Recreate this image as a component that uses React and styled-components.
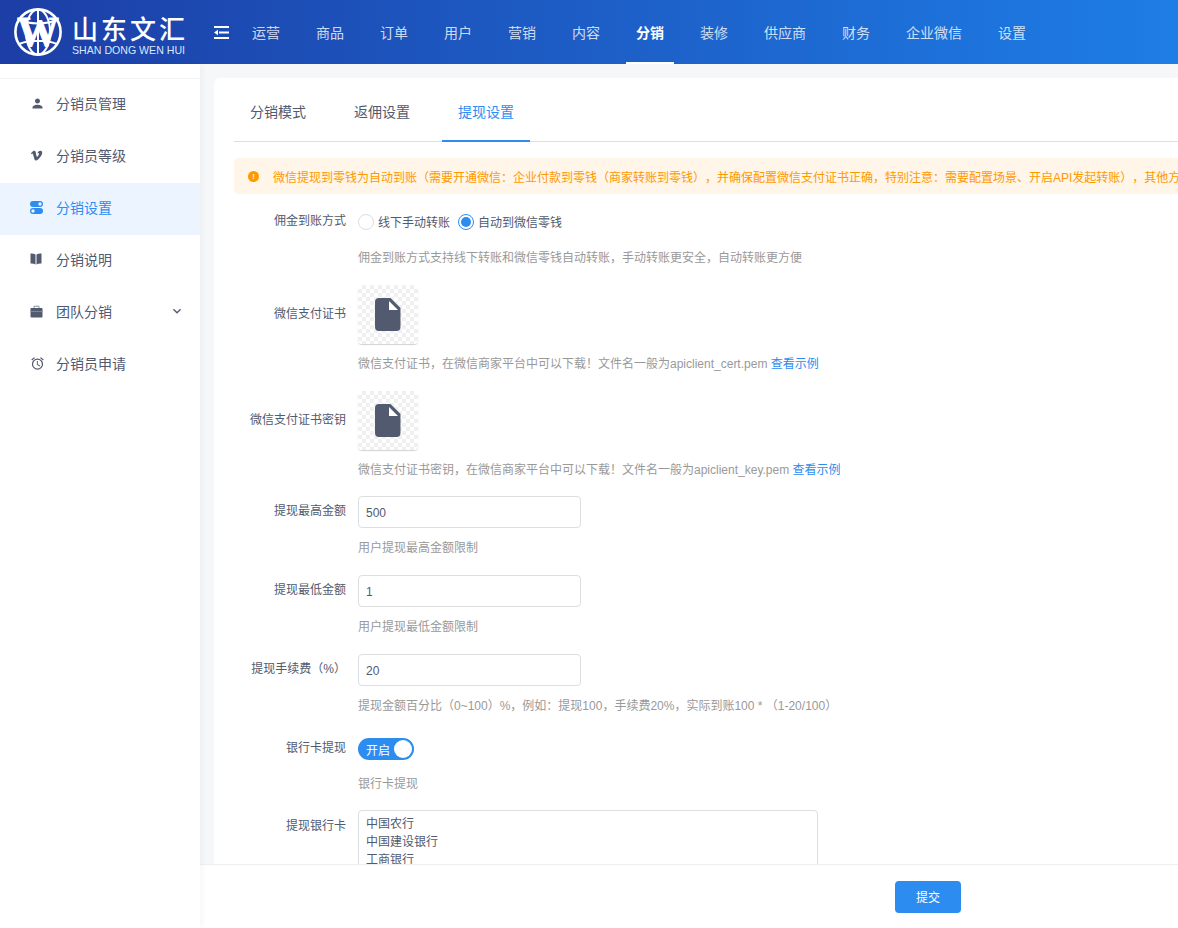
import React from 'react';
import styled, { createGlobalStyle } from 'styled-components';
import { FaVimeoV } from 'react-icons/fa';
import { MdPerson, MdOutlineAlarm, MdKeyboardArrowDown } from 'react-icons/md';

const GlobalStyle = createGlobalStyle`
    html, body {
        margin: 0;
        padding: 0;
        height: 100%;
        overflow: hidden;
    }
    body {
        font-family: "Liberation Sans", "Noto Sans CJK SC", sans-serif;
        font-size: 12px;
        color: #515a6e;
        text-spacing-trim: space-all;
    }
    * {
        box-sizing: border-box;
    }
`;

const Page = styled.div`
    width: 100%;
    height: 100vh;
    display: flex;
    flex-direction: column;
    overflow: hidden;
`;

const Header = styled.header`
    height: 64px;
    flex-shrink: 0;
    display: flex;
    align-items: center;
    background: linear-gradient(90deg, #1c3ea6 0%, #1e7de6 100%);
    color: #fff;
`;

const Logo = styled.div`
    width: 200px;
    height: 64px;
    padding-left: 14px;
    display: flex;
    align-items: center;
    gap: 10px;
    flex-shrink: 0;
`;

const LogoWords = styled.div`
    display: flex;
    flex-direction: column;
    gap: 2px;
    margin-top: 5px;
`;

const LogoTitle = styled.div`
    font-family: "Noto Sans CJK SC", sans-serif;
    font-size: 26px;
    font-weight: 500;
    line-height: 28px;
    letter-spacing: 3px;
    white-space: nowrap;
`;

const LogoSub = styled.div`
    font-size: 10.6px;
    line-height: 12px;
    white-space: nowrap;
    color: #dbe6fa;
`;

const MenuToggle = styled.div`
    width: 34px;
    padding-left: 14px;
    display: flex;
    flex-shrink: 0;
`;

const Nav = styled.nav`
    display: flex;
    height: 64px;
`;

const NavItem = styled.div`
    position: relative;
    padding: 0 18px;
    line-height: 66px;
    font-size: 14px;
    white-space: nowrap;
    color: ${(p) => (p.$active ? '#fff' : 'rgba(255, 255, 255, 0.8)')};
    font-weight: ${(p) => (p.$active ? 700 : 400)};

    &::after {
        content: '';
        display: ${(p) => (p.$active ? 'block' : 'none')};
        position: absolute;
        left: 8px;
        right: 8px;
        bottom: 0;
        height: 2px;
        background: #fff;
    }
`;

const Body = styled.div`
    flex: 1;
    min-height: 0;
    display: flex;
`;

const Sidebar = styled.aside`
    width: 200px;
    flex-shrink: 0;
    background: #fff;
    padding-top: 14px;
    box-shadow: 2px 0 6px rgba(0, 0, 0, 0.04);
    position: relative;
    z-index: 2;
`;

const SideList = styled.div`
    border-top: 1px solid #f3f4f6;
`;

const SideItem = styled.div`
    height: 52px;
    padding: 0 15px 4px 30px;
    display: flex;
    align-items: center;
    font-size: 14px;
    color: ${(p) => (p.$active ? '#2d8cf0' : '#515a6e')};
    background: ${(p) => (p.$active ? '#ecf5ff' : 'transparent')};
`;

const SideIcon = styled.span`
    width: 26px;
    display: flex;
    align-items: center;
    flex-shrink: 0;
`;

const SideLabel = styled.span`
    flex: 1;
`;

const Main = styled.main`
    flex: 1;
    min-width: 0;
    display: flex;
    flex-direction: column;
    background: #f5f7f9;
`;

const Scroll = styled.div`
    flex: 1;
    min-height: 0;
    overflow: hidden;
    padding: 14px 0 0 14px;
`;

const Card = styled.div`
    width: 1300px;
    height: 900px;
    background: #fff;
    border-radius: 6px 0 0 0;
    padding: 4px 20px 0;
`;

const Tabs = styled.div`
    display: flex;
    gap: 16px;
    height: 60px;
    border-bottom: 1px solid #dcdee2;
`;

const Tab = styled.div`
    padding: 0 16px;
    line-height: 60px;
    font-size: 14px;
    color: ${(p) => (p.$active ? '#2d8cf0' : '#515a6e')};
    border-bottom: 2px solid ${(p) => (p.$active ? '#2d8cf0' : 'transparent')};
    height: 60px;
`;

const Alert = styled.div`
    margin-top: 16px;
    height: 36px;
    padding-left: 14px;
    display: flex;
    align-items: center;
    gap: 14px;
    border-radius: 4px;
    background: #fff5e9;
    color: #ff9900;
    white-space: nowrap;
    overflow: hidden;
`;

const AlertDot = styled.span`
    width: 11px;
    height: 11px;
    border-radius: 50%;
    background: #ff9900;
    color: #fff5e9;
    font-size: 8px;
    line-height: 11px;
    font-weight: 700;
    text-align: center;
    flex-shrink: 0;
`;

const Form = styled.div`
    margin-top: 11px;
`;

const Row = styled.div`
    display: flex;
    margin-bottom: ${(p) => p.$gap ?? 18}px;
`;

const Label = styled.div`
    width: 112px;
    flex-shrink: 0;
    text-align: right;
    line-height: ${(p) => p.$line ?? 30}px;
    color: #515a6e;
    white-space: nowrap;
`;

const Control = styled.div`
    margin-left: 12px;
    flex: 1;
    min-width: 0;
`;

const Tip = styled.div`
    margin-top: ${(p) => p.$top ?? 11}px;
    line-height: 18px;
    color: #999;
    white-space: nowrap;
`;

const TipLink = styled.span`
    color: #2d8cf0;
`;

const RadioGroup = styled.div`
    height: 33px;
    display: flex;
    align-items: center;
    gap: 8px;
`;

const Radio = styled.label`
    display: flex;
    align-items: center;
    gap: 4px;
`;

const RadioMark = styled.span`
    width: 16px;
    height: 16px;
    border-radius: 50%;
    border: 1px solid ${(p) => (p.$checked ? '#2d8cf0' : '#dcdee2')};
    display: flex;
    align-items: center;
    justify-content: center;

    &::after {
        content: '';
        display: ${(p) => (p.$checked ? 'block' : 'none')};
        width: 10px;
        height: 10px;
        border-radius: 50%;
        background: #2d8cf0;
    }
`;

const FileBox = styled.div`
    width: 60px;
    height: 59px;
    border-radius: 4px;
    display: flex;
    align-items: center;
    justify-content: center;
    background: repeating-conic-gradient(#f0f0f0 0 25%, #fff 0 50%) 0 0 / 8px 8px;
    box-shadow: 0 1px 1px rgba(0, 0, 0, 0.18);
`;

const TextInput = styled.input`
    display: block;
    width: 223px;
    height: 32px;
    padding: 1px 7px 0;
    border: 1px solid #dcdee2;
    border-radius: 4px;
    outline: none;
    background: #fff;
    color: #515a6e;
    font: inherit;
`;

const SwitchLine = styled.div`
    height: 32px;
    display: flex;
    align-items: center;
`;

const Switch = styled.div`
    width: 56px;
    height: 22px;
    border-radius: 11px;
    padding: 0 2px 0 8px;
    display: flex;
    align-items: center;
    justify-content: space-between;
    background: #2d8cf0;
    color: #fff;
`;

const Knob = styled.span`
    width: 18px;
    height: 18px;
    border-radius: 50%;
    background: #fff;
`;

const TextArea = styled.textarea`
    display: block;
    width: 460px;
    height: 120px;
    padding: 4px 7px;
    border: 1px solid #dcdee2;
    border-radius: 4px;
    outline: none;
    resize: none;
    overflow: hidden;
    color: #515a6e;
    font: inherit;
    line-height: 18px;
`;

const Footer = styled.footer`
    height: 64px;
    flex-shrink: 0;
    background: #fff;
    border-top: 1px solid #eeeeee;
    padding-left: 695px;
    display: flex;
    align-items: center;
`;

const SubmitButton = styled.button`
    width: 66px;
    height: 32px;
    border: 0;
    border-radius: 4px;
    background: #2d8cf0;
    color: #fff;
    font: inherit;
`;

const LogoMark = () => (
    <svg width="48" height="48" viewBox="0 0 48 48" fill="none">
        <circle cx="24" cy="24" r="22.6" stroke="#fff" strokeWidth="2.6" />
        <ellipse cx="24" cy="24" rx="12" ry="22.5" stroke="#fff" strokeWidth="2" />
        <path d="M5 12C15 16.5 33 16.5 43 12M5 36C15 31.5 33 31.5 43 36M24 1.5V46.5" stroke="#fff" strokeWidth="2" />
        <text
            x="24"
            y="37.5"
            textAnchor="middle"
            fontFamily="Liberation Serif, serif"
            fontWeight="700"
            fontSize="42"
            fill="#fff"
            stroke="#fff"
            strokeWidth="0.8"
        >
            W
        </text>
    </svg>
);

const FoldIcon = () => (
    <svg width="15" height="13" viewBox="0 0 15 13" fill="#fff">
        <rect x="0" y="0" width="15" height="2" />
        <rect x="5" y="5.5" width="10" height="2" />
        <rect x="0" y="11" width="15" height="2" />
        <path d="M0 6.5 4 3.8V9.2Z" />
    </svg>
);

const TogglesIcon = () => (
    <svg width="13" height="13" viewBox="0 0 13 13" fill="#2d8cf0">
        <path d="M3 0h7a3 3 0 0 1 0 6H3a3 3 0 0 1 0-6Zm7 1.3a1.7 1.7 0 1 0 0 3.4 1.7 1.7 0 0 0 0-3.4Z" fillRule="evenodd" />
        <path d="M3 7h7a3 3 0 0 1 0 6H3a3 3 0 0 1 0-6Zm0 1.3a1.7 1.7 0 1 0 0 3.4 1.7 1.7 0 0 0 0-3.4Z" fillRule="evenodd" />
    </svg>
);

const BookIcon = () => (
    <svg width="12" height="12" viewBox="0 0 12 12" fill="#515a6e">
        <path d="M0.5 0.5C2.3 0.3 4.2 0.6 5.5 1.5V11.5C4.2 10.7 2.3 10.4 0.5 10.6Z" />
        <path d="M11.5 0.5C9.7 0.3 7.8 0.6 6.5 1.5V11.5C7.8 10.7 9.7 10.4 11.5 10.6Z" />
    </svg>
);

const CaseIcon = () => (
    <svg width="13" height="13" viewBox="0 0 13 13">
        <path d="M4 3V1.2h5V3" fill="none" stroke="#8a90a0" strokeWidth="1" />
        <rect x="0.5" y="3" width="12" height="9.5" rx="0.8" fill="#515a6e" />
        <rect x="0.5" y="6" width="12" height="0.8" fill="#8a90a0" />
    </svg>
);

const FileIcon = () => (
    <svg width="26" height="33" viewBox="0 0 26 33">
        <path d="M4 0H15.5L25.5 10V29a4 4 0 0 1-4 4H4a4 4 0 0 1-4-4V4a4 4 0 0 1 4-4Z" fill="#515a6e" />
        <path d="M14 3V12H23Z" fill="#fff" />
    </svg>
);

const navItems = ['运营', '商品', '订单', '用户', '营销', '内容', '分销', '装修', '供应商', '财务', '企业微信', '设置'];

const sideItems = [
    { label: '分销员管理', icon: <MdPerson size={15} /> },
    { label: '分销员等级', icon: <FaVimeoV size={13} /> },
    { label: '分销设置', icon: <TogglesIcon />, active: true },
    { label: '分销说明', icon: <BookIcon /> },
    { label: '团队分销', icon: <CaseIcon />, more: true },
    { label: '分销员申请', icon: <MdOutlineAlarm size={15} /> },
];

const App = () => {
    return (
        <Page>
            <GlobalStyle />
            <Header>
                <Logo>
                    <LogoMark />
                    <LogoWords>
                        <LogoTitle>山东文汇</LogoTitle>
                        <LogoSub>SHAN DONG WEN HUI</LogoSub>
                    </LogoWords>
                </Logo>
                <MenuToggle>
                    <FoldIcon />
                </MenuToggle>
                <Nav>
                    {navItems.map((item) => (
                        <NavItem key={item} $active={item === '分销'}>
                            {item}
                        </NavItem>
                    ))}
                </Nav>
            </Header>
            <Body>
                <Sidebar>
                    <SideList>
                        {sideItems.map((item) => (
                            <SideItem key={item.label} $active={item.active}>
                                <SideIcon>{item.icon}</SideIcon>
                                <SideLabel>{item.label}</SideLabel>
                                {item.more && <MdKeyboardArrowDown size={16} />}
                            </SideItem>
                        ))}
                    </SideList>
                </Sidebar>
                <Main>
                    <Scroll>
                        <Card>
                            <Tabs>
                                <Tab>分销模式</Tab>
                                <Tab>返佣设置</Tab>
                                <Tab $active>提现设置</Tab>
                            </Tabs>
                            <Alert>
                                <AlertDot>!</AlertDot>
                                微信提现到零钱为自动到账（需要开通微信：企业付款到零钱（商家转账到零钱），并确保配置微信支付证书正确，特别注意：需要配置场景、开启API发起转账），其他方式请手动转账
                            </Alert>
                            <Form>
                                <Row>
                                    <Label $line={32}>佣金到账方式</Label>
                                    <Control>
                                        <RadioGroup>
                                            <Radio>
                                                <RadioMark />
                                                线下手动转账
                                            </Radio>
                                            <Radio>
                                                <RadioMark $checked />
                                                自动到微信零钱
                                            </Radio>
                                        </RadioGroup>
                                        <Tip>佣金到账方式支持线下转账和微信零钱自动转账，手动转账更安全，自动转账更方便</Tip>
                                    </Control>
                                </Row>
                                <Row>
                                    <Label $line={58}>微信支付证书</Label>
                                    <Control>
                                        <FileBox>
                                            <FileIcon />
                                        </FileBox>
                                        <Tip>
                                            微信支付证书，在微信商家平台中可以下载！文件名一般为apiclient_cert.pem <TipLink>查看示例</TipLink>
                                        </Tip>
                                    </Control>
                                </Row>
                                <Row $gap={17}>
                                    <Label $line={58}>微信支付证书密钥</Label>
                                    <Control>
                                        <FileBox>
                                            <FileIcon />
                                        </FileBox>
                                        <Tip>
                                            微信支付证书密钥，在微信商家平台中可以下载！文件名一般为apiclient_key.pem <TipLink>查看示例</TipLink>
                                        </Tip>
                                    </Control>
                                </Row>
                                <Row>
                                    <Label $line={31}>提现最高金额</Label>
                                    <Control>
                                        <TextInput defaultValue="500" />
                                        <Tip>用户提现最高金额限制</Tip>
                                    </Control>
                                </Row>
                                <Row>
                                    <Label>提现最低金额</Label>
                                    <Control>
                                        <TextInput defaultValue="1" />
                                        <Tip>用户提现最低金额限制</Tip>
                                    </Control>
                                </Row>
                                <Row>
                                    <Label>提现手续费（%）</Label>
                                    <Control>
                                        <TextInput defaultValue="20" />
                                        <Tip>提现金额百分比（0~100）%，例如：提现100，手续费20%，实际到账100 * （1-20/100）</Tip>
                                    </Control>
                                </Row>
                                <Row $gap={17}>
                                    <Label>银行卡提现</Label>
                                    <Control>
                                        <SwitchLine>
                                            <Switch>
                                                开启
                                                <Knob />
                                            </Switch>
                                        </SwitchLine>
                                        <Tip $top={10}>银行卡提现</Tip>
                                    </Control>
                                </Row>
                                <Row>
                                    <Label $line={32}>提现银行卡</Label>
                                    <Control>
                                        <TextArea defaultValue={'中国农行\n中国建设银行\n工商银行\n招商银行\n交通银行'} />
                                    </Control>
                                </Row>
                            </Form>
                        </Card>
                    </Scroll>
                    <Footer>
                        <SubmitButton>提交</SubmitButton>
                    </Footer>
                </Main>
            </Body>
        </Page>
    );
};

export default App;
